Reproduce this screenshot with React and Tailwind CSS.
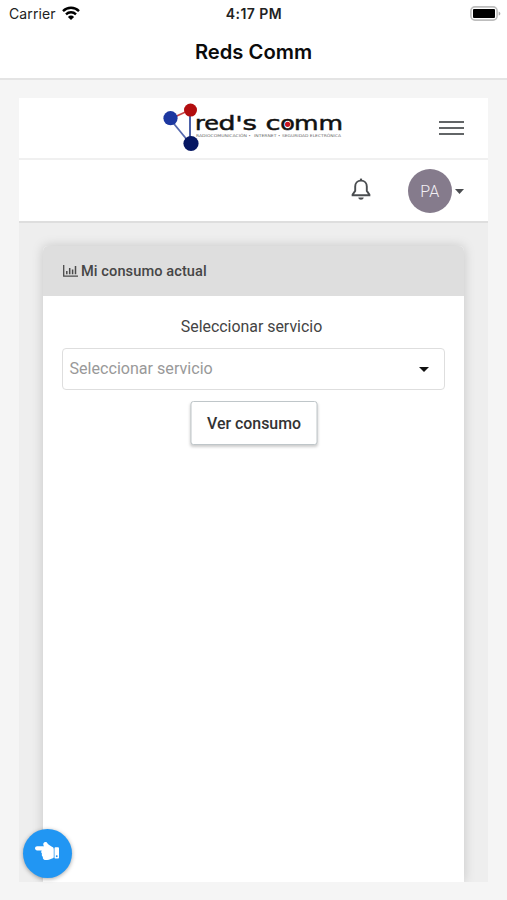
import { FaHandPointLeft } from 'react-icons/fa';

const StatusBar = () => (
  <div className="flex h-7 items-center justify-between pl-[9px] pr-[6px] font-['Inter',sans-serif] text-[14px] text-[#222]">
    <div className="flex flex-1 items-center gap-[6px]">
      <span className="-mt-0.5 w-[47px] tracking-[0.1px]">Carrier</span>
      <svg className="-mt-[3px] h-[14px] w-[18px]" viewBox="0 0 18 14" fill="none" stroke="#000" strokeWidth="2.4">
        <path d="M1 5.1a11.4 11.4 0 0 1 16 0" />
        <path d="M4 8.3a7.2 7.2 0 0 1 10 0" />
        <path d="M9 14 5.9 10.9a4.4 4.4 0 0 1 6.2 0z" fill="#000" stroke="none" />
      </svg>
    </div>
    <span className="-mt-0.5 mr-0.5 text-[14px] font-semibold tracking-[0.45px]">4:17 PM</span>
    <div className="flex flex-1 justify-end">
      <svg className="-mt-0.5 h-[15px] w-[31px]" viewBox="0 0 31 15">
        <rect x="0.9" y="0.9" width="26.2" height="13.2" rx="4" fill="#fff" stroke="#bdbdbd" strokeWidth="1.6" />
        <rect x="3" y="3" width="22" height="9" rx="1" fill="#000" />
        <path d="M28.7 5.4c2.2.8 2.2 3.4 0 4.2z" fill="#aaa" />
      </svg>
    </div>
  </div>
);

const Logo = () => (
  <svg className="h-[50px] w-[182px]" viewBox="0 0 182 50">
    <g strokeWidth="1.8">
      <path d="M8 16 28 7" stroke="#c64545" />
      <path d="M8 16 28.5 41" stroke="#5568ae" />
      <path d="M28 8v32" stroke="#39509f" />
    </g>
    <circle cx="8.5" cy="15.2" r="7.1" fill="#1c37a0" />
    <circle cx="28.5" cy="7.1" r="6.5" fill="#b20d0f" />
    <circle cx="29" cy="40.5" r="7.6" fill="#061763" />
    <g fontFamily="DejaVu Sans" fontSize="20" fill="#111" stroke="#111" strokeWidth="0.5">
      <text x="33" y="26.8" textLength="24" lengthAdjust="spacingAndGlyphs">re</text>
      <text x="56.5" y="26.8" textLength="17" lengthAdjust="spacingAndGlyphs">d</text>
      <text x="73.5" y="26.8" textLength="7" lengthAdjust="spacingAndGlyphs">'</text>
      <text x="80.5" y="26.8" textLength="14.5" lengthAdjust="spacingAndGlyphs">s</text>
      <text x="103.5" y="26.8" textLength="15" lengthAdjust="spacingAndGlyphs">c</text>
      <text x="118.3" y="26.8" textLength="14.6" lengthAdjust="spacingAndGlyphs">o</text>
      <text x="132" y="26.8" textLength="49" lengthAdjust="spacingAndGlyphs">mm</text>
    </g>
    <circle cx="125.6" cy="21.3" r="2.6" fill="#c91520" />
    <g fontFamily="DejaVu Sans" fontSize="3.8" fill="#666">
      <text x="34" y="33.5" textLength="51" lengthAdjust="spacingAndGlyphs">RADIOCOMUNICACIÓN</text>
      <text x="86.5" y="33.5">•</text>
      <text x="92" y="33.5" textLength="22.5" lengthAdjust="spacingAndGlyphs">INTERNET</text>
      <text x="116" y="33.5">•</text>
      <text x="120" y="33.5" textLength="59" lengthAdjust="spacingAndGlyphs">SEGURIDAD ELECTRÓNICA</text>
    </g>
  </svg>
);

const BellIcon = () => (
  <svg className="h-[23px] w-5" viewBox="0 0 20 23" fill="none" stroke="#4a4d50" strokeWidth="1.9">
    <path d="M10 2.6c-3.7 0-5.8 2.6-5.8 6v4.3l-2.6 3.7v.6h16.8v-.6l-2.6-3.7V8.6c0-3.4-2.1-6-5.8-6z" />
    <path d="M10 .6v2" strokeWidth="2.2" />
    <path d="M7.3 19.4h5.4c-.3 3-5.1 3-5.4 0z" fill="#4a4d50" stroke="none" />
  </svg>
);

const ChartIcon = () => (
  <svg className="h-3 w-[15px]" viewBox="0 0 15 12" fill="none" stroke="#4b4b4b" strokeWidth="1.3">
    <path d="M.7 0v11.2H15" />
    <path d="M3.8 6v3.3M6.7 3v6.3M9.6 4.5v4.8M12.5 1v8.3" strokeWidth="1.5" />
  </svg>
);

const Caret = ({ className, color }) => (
  <svg className={className} viewBox="0 0 10 5" preserveAspectRatio="none">
    <path d="M0 0h10L5 5z" fill={color} />
  </svg>
);

const Navbar = () => (
  <>
    <div className="flex h-[62px] items-center justify-between border-b-2 border-[#f0f0f0] bg-white pl-[143px] pr-6">
      <Logo />
      <button className="flex w-[25px] flex-col gap-[4.5px]" aria-label="Menu">
        <span className="h-[1.5px] w-full bg-[#626567]" />
        <span className="h-[1.5px] w-full bg-[#626567]" />
        <span className="h-[1.5px] w-full bg-[#626567]" />
      </button>
    </div>
    <div className="flex h-[63px] items-center justify-end border-b-2 border-[#dedede] bg-white pr-6 pt-px">
      <div className="mb-[3px] mr-[36.5px]"><BellIcon /></div>
      <div className="flex size-[44.5px] items-center justify-center rounded-full bg-[#857b8c] pt-px text-[16px] font-light text-[#f3f0f5]">
        PA
      </div>
      <Caret className="ml-[3px] h-[5px] w-[9px]" color="#4b4d50" />
    </div>
  </>
);

const ConsumptionCard = () => (
  <div className="flex flex-1 flex-col rounded-t-[5px] bg-white shadow-[0_0_12px_rgba(0,0,0,0.17)]">
    <div className="flex h-[50px] items-center gap-[3px] rounded-t-[5px] bg-[#dedede] pl-5 text-[14.6px] font-medium text-[#464646]">
      <ChartIcon />
      <span className="pt-px tracking-[0.08px]">Mi consumo actual</span>
    </div>
    <div className="flex flex-col items-center px-[19px] pt-[19px]">
      <label className="-translate-x-0.5 text-[15.9px] leading-6 text-[#444]">Seleccionar servicio</label>
      <div className="mt-[9px] flex h-[42px] w-full items-center justify-between rounded-[4px] border-[1.5px] border-[#dedede] pl-[6.5px] pr-[15px]">
        <span className="text-[16.1px] text-[#999]">Seleccionar servicio</span>
        <Caret className="h-[5px] w-[10px]" color="#111" />
      </div>
      <button className="mt-[11px] h-11 w-[127px] translate-x-[0.5px] rounded-[3px] border-[1.5px] border-[#bfc6c9] bg-white pt-px text-[15.9px] font-medium text-[#333] shadow-[0_2px_3px_rgba(0,0,0,0.2)]">
        Ver consumo
      </button>
    </div>
  </div>
);

export default function App() {
  return (
    <div className="relative flex h-[900px] w-[507px] flex-col overflow-hidden bg-[#f5f5f5] font-['Roboto',sans-serif]">
      <header className="h-20 border-b-2 border-[#e4e4e4] bg-white">
        <StatusBar />
        <h1 className="mt-2 text-center font-['Inter',sans-serif] text-[20.2px] font-semibold leading-8 text-[#0b0b0b]">
          Reds Comm
        </h1>
      </header>
      <main className="mx-[19px] mt-[18px] flex h-[784px] flex-col overflow-hidden bg-[#eee]">
        <Navbar />
        <div className="flex flex-1 px-6 pt-[23px]">
          <ConsumptionCard />
        </div>
      </main>
      {/* Floating action button */}
      <button className="absolute left-[23px] top-[829px] flex size-[49px] items-center justify-center rounded-full bg-[#2196f3] text-white shadow-[0_1px_4px_rgba(0,0,0,0.35)]">
        <FaHandPointLeft className="mb-[5px] mr-px size-6" />
      </button>
    </div>
  );
}
